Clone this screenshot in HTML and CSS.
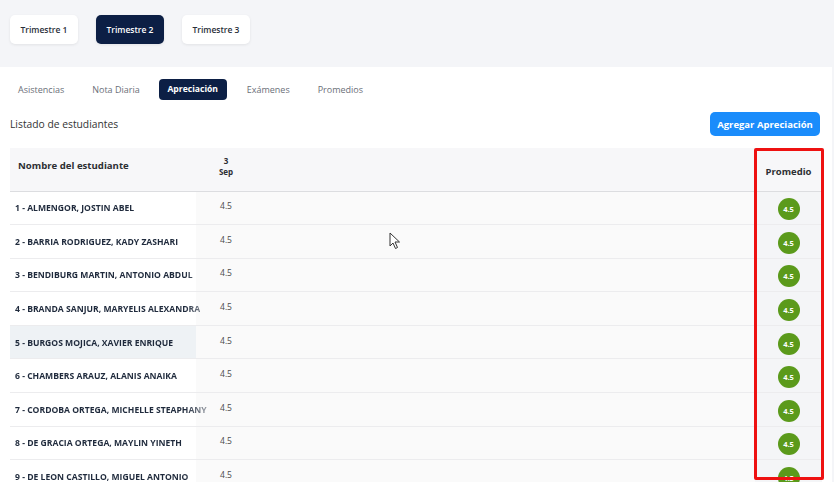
FILE: index.html
```html
<!DOCTYPE html>
<html lang="es">
<head>
    <meta charset="UTF-8">
    <title>Apreciación</title>
    <link rel="stylesheet" href="styles.css">
</head>
<body>
    <div class="terms">
        <button class="term">Trimestre 1</button>
        <button class="term active">Trimestre 2</button>
        <button class="term">Trimestre 3</button>
    </div>

    <div class="card">
        <div class="tabs">
            <span class="tab">Asistencias</span>
            <span class="tab">Nota Diaria</span>
            <span class="tab active">Apreciación</span>
            <span class="tab">Exámenes</span>
            <span class="tab">Promedios</span>
        </div>

        <div class="list-head">
            <h3>Listado de estudiantes</h3>
            <button class="btn-add">Agregar Apreciación</button>
        </div>

        <div class="table-wrap">
            <table class="grades">
                <thead>
                    <tr>
                        <th class="col-name">Nombre del estudiante</th>
                        <th class="col-date">3<br>Sep</th>
                        <th class="col-fill"></th>
                        <th class="col-avg">Promedio</th>
                    </tr>
                </thead>
                <tbody id="rows"></tbody>
            </table>
            <div class="highlight"></div>
        </div>
    </div>

    <svg class="cursor" width="12" height="18" viewBox="0 0 12 18">
        <path d="M1 1 L1 14 L4 11 L6.5 16.5 L8.5 15.5 L6 10 L10.5 10 Z" fill="#fff" stroke="#333" stroke-width="1"/>
    </svg>

    <script>
        const students = [
            'ALMENGOR, JOSTIN ABEL',
            'BARRIA RODRIGUEZ, KADY ZASHARI',
            'BENDIBURG MARTIN, ANTONIO ABDUL',
            'BRANDA SANJUR, MARYELIS ALEXANDRA',
            'BURGOS MOJICA, XAVIER ENRIQUE',
            'CHAMBERS ARAUZ, ALANIS ANAIKA',
            'CORDOBA ORTEGA, MICHELLE STEAPHANY',
            'DE GRACIA ORTEGA, MAYLIN YINETH',
            'DE LEON CASTILLO, MIGUEL ANTONIO'
        ];

        const tbody = document.getElementById('rows');
        students.forEach(function (name, i) {
            const row = tbody.insertRow();
            const nameCell = row.insertCell(0);
            const dateCell = row.insertCell(1);
            const fillCell = row.insertCell(2);
            const avgCell = row.insertCell(3);

            nameCell.className = 'col-name';
            if (i === 4) nameCell.classList.add('hover');
            nameCell.innerHTML = '<span class="name">' + (i + 1) + ' - ' + name + '</span>';
            dateCell.className = 'col-date';
            dateCell.textContent = '4.5';
            fillCell.className = 'col-fill';
            avgCell.className = 'col-avg';
            avgCell.innerHTML = '<span class="badge">4.5</span>';
        });
    </script>
</body>
</html>
```

FILE: styles.css
```css
body {
    margin: 0;
    background-color: #f4f5f8;
    font-family: "Open Sans", "Liberation Sans", sans-serif;
    height: 482px;
    overflow: hidden;
    position: relative;
}

button {
    font-family: inherit;
    cursor: pointer;
}

.terms {
    display: flex;
    gap: 18px;
    padding: 15px 10px 0;
    height: 52px;
}

.term {
    width: 68px;
    height: 29px;
    border: none;
    border-radius: 5px;
    background: #fff;
    color: #2a2f3a;
    font-size: 8.5px;
    font-weight: 600;
    padding: 0;
    box-shadow: 0 1px 3px rgba(0, 0, 0, 0.08);
}

.term.active {
    background: #0c1f45;
    color: #fff;
}

.card {
    background: #fff;
    width: 832px;
    height: 415px;
    padding: 12px 0 0 10px;
    box-sizing: border-box;
}

.tabs {
    display: flex;
    align-items: center;
    height: 21px;
}

.tab {
    font-size: 9px;
    color: #6b6f78;
    padding: 0 8px;
    margin-right: 12px;
    line-height: 21px;
}

.tab.active {
    background: #0c1f45;
    color: #fff;
    font-size: 8.6px;
    font-weight: 700;
    border-radius: 4px;
    width: 68px;
    padding: 0;
    text-align: center;
    margin: 0 12px 0 -1px;
}

.list-head {
    display: flex;
    justify-content: space-between;
    align-items: center;
    margin-top: 12px;
    padding-right: 12px;
}

.list-head h3 {
    margin: 0;
    font-size: 10.3px;
    font-weight: 500;
    color: #333;
}

.btn-add {
    width: 110px;
    height: 24px;
    border: none;
    border-radius: 5px;
    background: #1a8cfb;
    color: #fff;
    font-size: 9.5px;
    font-weight: 700;
}

.table-wrap {
    position: relative;
    margin-top: 12px;
    width: 812px;
}

.grades {
    width: 100%;
    border-collapse: collapse;
    table-layout: fixed;
}

.grades thead tr {
    height: 43px;
}

.grades tbody tr {
    height: 33.6px;
}

.grades th {
    background: #f7f7f9;
    font-size: 10px;
    font-weight: 700;
    color: #2d2f33;
    border-bottom: 1px solid #dcdde0;
    padding: 0;
}

.grades td {
    padding: 0;
    border-bottom: 1px solid #ececee;
    background: #fafafa;
}

th.col-name {
    width: 178px;
    text-align: left;
    padding: 0 0 8px 8px;
    font-size: 9.6px;
}

th.col-date {
    width: 60px;
    font-size: 8px;
    line-height: 11px;
    padding-bottom: 6px;
}

th.col-avg {
    width: 67px;
    padding-top: 4px;
    font-size: 9.5px;
}

td.col-name {
    background: #fff;
    white-space: nowrap;
    font-size: 8.6px;
    font-weight: 700;
    padding-left: 5px;
    padding-top: 1px;
}

td.col-name .name {
    color: transparent;
    background: linear-gradient(to right, #1f2a3c 170px, rgba(31, 42, 60, 0.25) 200px);
    -webkit-background-clip: text;
    background-clip: text;
}

td.col-name.hover {
    background: #eef2f5;
}

td.col-date {
    text-align: center;
    font-size: 8.5px;
    color: #4a4a4a;
    padding-bottom: 4px;
}

td.col-avg {
    text-align: center;
    background: #f4f5f7;
}

.badge {
    display: inline-flex;
    align-items: center;
    justify-content: center;
    width: 22px;
    height: 22px;
    margin-top: 2px;
    border-radius: 50%;
    background: #5b9a1b;
    color: #fff;
    font-size: 7.5px;
    font-weight: 700;
}

.highlight {
    position: absolute;
    left: 744px;
    top: 0;
    width: 64px;
    height: 326px;
    border: 3px solid #ee1111;
    border-radius: 2px;
}

.cursor {
    position: absolute;
    left: 389px;
    top: 232px;
}
```
